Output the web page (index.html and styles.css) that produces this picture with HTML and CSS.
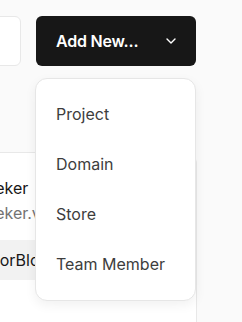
FILE: index.html
```
<!DOCTYPE html>
<html lang="en">
<head>
  <meta charset="UTF-8" />
  <meta name="viewport" content="width=device-width, initial-scale=1" />
  <title>Projects</title>
  <link rel="stylesheet" href="styles.css">
</head>
<body>

  <div class="page">

    <!-- toolbar -->
    <div class="toolbar">
      <div class="search"></div>

      <div class="add-wrap">
        <button class="add-btn">
          <span>Add New...</span>
          <svg width="16" height="16" viewBox="0 0 16 16" fill="none">
            <polyline points="4,6 8,10 12,6" stroke="#fff" stroke-width="1.4" stroke-linecap="round" stroke-linejoin="round" />
          </svg>
        </button>

        <ul class="menu">
          <li>Project</li>
          <li>Domain</li>
          <li>Store</li>
          <li>Team Member</li>
        </ul>
      </div>
    </div>

    <!-- project card -->
    <div class="card">
      <div class="card-text">
        <div class="name">vibe-seeker</div>
        <div class="url">vibe-seeker.vercel.app</div>
      </div>
      <div class="repo">NextEditorBlog</div>
    </div>

  </div>

</body>
</html>
```

FILE: styles.css
```
* {
  box-sizing: border-box;
  margin: 0;
  padding: 0;
}

body {
  font-family: Inter, 'Noto Sans', sans-serif;
  background: #fafafa;
  color: #171717;
  overflow: hidden;
}

.page {
  margin-left: -160px;
  width: 357px;
}

.toolbar {
  display: flex;
  gap: 15px;
  padding-top: 16px;
}

.search {
  width: 181px;
  height: 50px;
  background: #fff;
  border: 1px solid #e8e8e8;
  border-radius: 6px;
}

.add-wrap {
  position: relative;
}

.add-btn {
  width: 160px;
  height: 50px;
  display: flex;
  align-items: center;
  justify-content: space-between;
  padding: 0 17px 0 20px;
  background: #171717;
  color: #fff;
  border: none;
  border-radius: 6px;
  font-family: inherit;
  font-size: 16px;
  font-weight: 600;
  letter-spacing: -0.2px;
}

.menu {
  position: absolute;
  top: 62px;
  left: -1px;
  width: 161px;
  list-style: none;
  background: #fff;
  border: 1px solid #e6e6e6;
  border-radius: 12px;
  box-shadow: 0 4px 12px rgba(0, 0, 0, 0.06);
  padding: 10px 0 11px;
  z-index: 10;
}

.menu li {
  height: 50px;
  display: flex;
  align-items: center;
  padding-left: 20px;
  font-size: 16px;
  color: #3d3d3d;
}

.card {
  margin-top: 86px;
  width: 357px;
  height: 170px;
  background: #fff;
  border: 1px solid #e8e8e8;
  border-bottom: none;
  border-radius: 12px 12px 0 0;
  padding: 23px 0 0 97px;
}

.card-text .name,
.card-text .url {
  font-size: 16px;
  line-height: 25px;
}

.card-text .url {
  color: #737373;
}

.repo {
  margin-top: 14px;
  margin-left: -22px;
  width: 200px;
  height: 40px;
  display: flex;
  align-items: center;
  padding-left: 20px;
  background: #f2f2f2;
  border-radius: 6px;
  font-size: 16px;
}
```
